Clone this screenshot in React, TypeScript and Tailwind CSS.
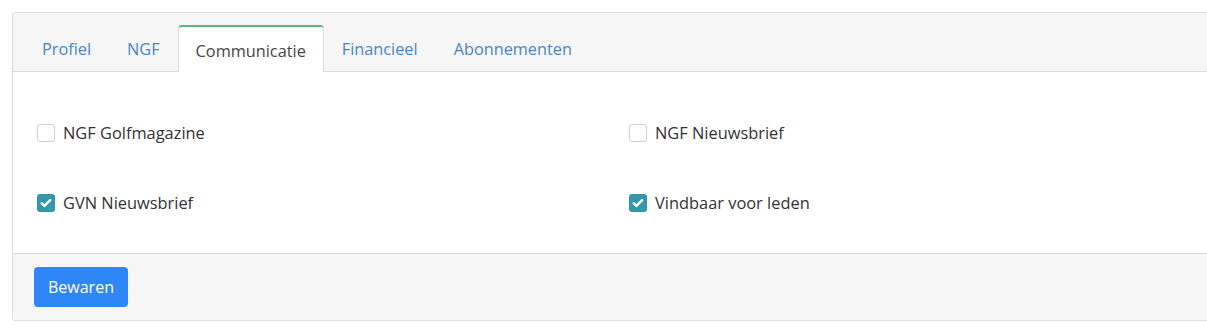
import { useState } from "react";

const tabs = ["Profiel", "NGF", "Communicatie", "Financieel", "Abonnementen"];

const options = [
  { id: "golfmagazine", label: "NGF Golfmagazine", checked: false },
  { id: "ngf-nieuwsbrief", label: "NGF Nieuwsbrief", checked: false },
  { id: "gvn-nieuwsbrief", label: "GVN Nieuwsbrief", checked: true },
  { id: "vindbaar", label: "Vindbaar voor leden", checked: true },
];

function Checkbox({ checked, onChange }: { checked: boolean; onChange: () => void }) {
  return (
    <button
      type="button"
      onClick={onChange}
      className={
        checked
          ? "flex h-[18px] w-[18px] shrink-0 items-center justify-center rounded-[3px] bg-[#3498ad]"
          : "h-[18px] w-[18px] shrink-0 rounded-[3px] border border-[#cfcfcf] bg-white"
      }
    >
      {checked && (
        <svg viewBox="0 0 16 16" className="h-[14px] w-[14px]" fill="none">
          <path
            d="M3.2 8.4l3.1 3L12.8 4.8"
            stroke="white"
            strokeWidth="2.8"
            strokeLinecap="round"
            strokeLinejoin="round"
          />
        </svg>
      )}
    </button>
  );
}

export default function App() {
  const [active, setActive] = useState("Communicatie");
  const [values, setValues] = useState(
    Object.fromEntries(options.map((o) => [o.id, o.checked])) as Record<string, boolean>
  );

  return (
    <div
      className="h-[330px] w-[1207px] overflow-hidden bg-white pl-3 pt-3"
      style={{ fontFamily: '"Open Sans", "Noto Sans", sans-serif' }}
    >
      <div className="w-[1240px] rounded-[3px] border border-[#dcdcdc]">
        {/* tab header */}
        <div className="flex items-end border-b border-[#dcdcdc] bg-[#f6f6f6] px-[11px] pt-[12px]">
          {tabs.map((tab) => {
            const isActive = tab === active;
            return (
              <button
                key={tab}
                type="button"
                onClick={() => setActive(tab)}
                className={
                  isActive
                    ? "-mb-px h-[47px] rounded-t-[4px] border-x border-t-2 border-[#dcdcdc] border-t-[#5cb874] bg-white px-[17px] pt-[3px] text-[16.3px] text-[#454545]"
                    : "h-[46px] px-[18px] pt-[3px] text-[16.3px] text-[#4a85c4]"
                }
              >
                {tab}
              </button>
            );
          })}
        </div>

        {/* body */}
        <div className="grid h-[181px] grid-cols-[592px_1fr] content-start gap-y-[52px] px-6 pt-[52px]">
          {options.map((o) => (
            <label key={o.id} className="flex h-[18px] items-center gap-[8px] text-[16.4px] text-[#333]">
              <Checkbox
                checked={values[o.id]}
                onChange={() => setValues((v) => ({ ...v, [o.id]: !v[o.id] }))}
              />
              <span>{o.label}</span>
            </label>
          ))}
        </div>

        {/* footer */}
        <div className="border-t border-[#dcdcdc] bg-[#f6f6f6] px-[21px] py-[13px]">
          <button
            type="button"
            className="h-10 rounded-[4px] bg-[#2f86f6] px-[14px] text-[16px] text-white"
          >
            Bewaren
          </button>
        </div>
      </div>
    </div>
  );
}
